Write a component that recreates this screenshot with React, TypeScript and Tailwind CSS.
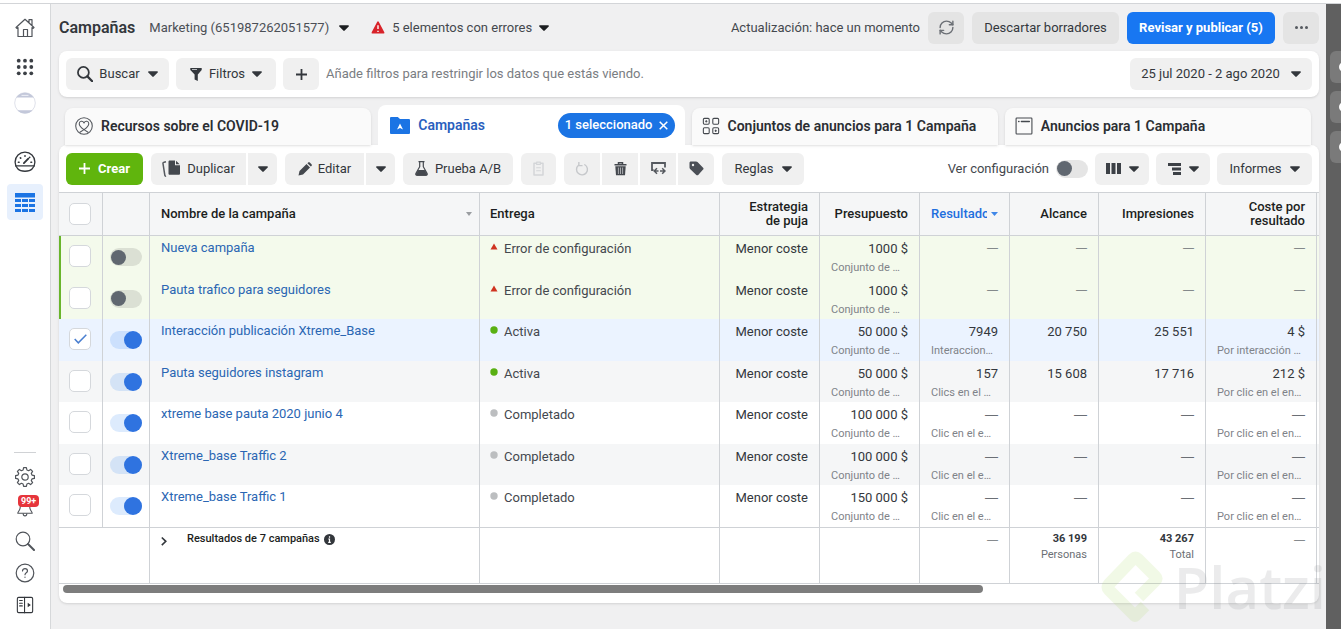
import type { ReactNode } from "react";
import clsx from "clsx";
import { RefreshCw } from "lucide-react";

type Status = "error" | "active" | "done";

interface Campaign {
  name: string;
  status: Status;
  on: boolean;
  checked?: boolean;
  budget: string;
  results?: string;
  resultsNote?: string;
  reach?: string;
  impressions?: string;
  cost?: string;
  costNote?: string;
}

const CAMPAIGNS: Campaign[] = [
  { name: "Nueva campaña", status: "error", on: false, budget: "1000 $" },
  { name: "Pauta trafico para seguidores", status: "error", on: false, budget: "1000 $" },
  {
    name: "Interacción publicación Xtreme_Base",
    status: "active",
    on: true,
    checked: true,
    budget: "50 000 $",
    results: "7949",
    resultsNote: "Interaccion…",
    reach: "20 750",
    impressions: "25 551",
    cost: "4 $",
    costNote: "Por interacción …",
  },
  {
    name: "Pauta seguidores instagram",
    status: "active",
    on: true,
    budget: "50 000 $",
    results: "157",
    resultsNote: "Clics en el …",
    reach: "15 608",
    impressions: "17 716",
    cost: "212 $",
    costNote: "Por clic en el en…",
  },
  { name: "xtreme base pauta 2020 junio 4", status: "done", on: true, budget: "100 000 $", resultsNote: "Clic en el e…", costNote: "Por clic en el en…" },
  { name: "Xtreme_base Traffic 2", status: "done", on: true, budget: "100 000 $", resultsNote: "Clic en el e…", costNote: "Por clic en el en…" },
  { name: "Xtreme_base Traffic 1", status: "done", on: true, budget: "150 000 $", resultsNote: "Clic en el e…", costNote: "Por clic en el en…" },
];

const STATUS_LABEL: Record<Status, string> = {
  error: "Error de configuración",
  active: "Activa",
  done: "Completado",
};

/* ---------- icons ---------- */

function Icon({ size = 20, className, children }: { size?: number; className?: string; children: ReactNode }) {
  return (
    <svg
      width={size}
      height={size}
      viewBox="0 0 20 20"
      fill="none"
      stroke="currentColor"
      strokeWidth="1.2"
      strokeLinecap="round"
      strokeLinejoin="round"
      aria-hidden="true"
      className={clsx("shrink-0", className)}
    >
      {children}
    </svg>
  );
}

function Caret({ className }: { className?: string }) {
  return (
    <svg width="10" height="6" viewBox="0 0 10 6" fill="currentColor" aria-hidden="true" className={clsx("shrink-0", className)}>
      <path d="M.9.2h8.2c.8 0 1.1.8.6 1.3L5.7 5.6a1 1 0 0 1-1.4 0L.3 1.5C-.2 1 .1.2.9.2Z" />
    </svg>
  );
}

const HomeIcon = () => (
  <Icon className="text-[#50545a]">
    <path d="M1 9.5 10 1.3l9 8.2-.9.9L17 9.6V18.5H3V9.6l-1.1.8Z M14 4.8V1.6h3v6" />
    <path d="M8.5 18.5v-7h4v7" />
  </Icon>
);

const DotsIcon = () => (
  <Icon size={18} className="text-[#3c4046]">
    {[3, 10, 17].map((y) => [3, 10, 17].map((x) => <circle key={`${x}-${y}`} cx={x} cy={y} r="2.1" fill="currentColor" stroke="none" />))}
  </Icon>
);

const AvatarIcon = () => (
  <svg width="22" height="22" viewBox="0 0 22 22" fill="none" aria-hidden="true">
    <circle cx="11" cy="11" r="10.3" fill="#fff" stroke="#dfe1ea" />
    <path d="M2.2 5.4a10.6 10.6 0 0 1 17.6 0Z" fill="#c3c8da" />
    <path d="M3.4 18.2h15.2a10.5 10.5 0 0 1-15.2 0Z" fill="#c3c8da" />
    <path d="M7.5 3.4h7" stroke="#eef0f6" />
  </svg>
);

const GaugeIcon = () => (
  <Icon className="text-[#33373c]" size={22}>
    <path d="M3.6 16.4a9 9 0 1 1 12.8 0c-1 1.1-3 2-6.4 2s-5.4-.9-6.4-2Z" />
    <path d="M1.6 13.6h16.8" />
    <path d="m9 11 4-4" strokeWidth="1.7" />
    <path d="M4 10.2h.6M5.8 6.2l.3.3M10 4.3v.5M15.4 10.2h.6M14.3 5.7l-.2.2" strokeWidth="1.5" />
  </Icon>
);

const TableIcon = () => (
  <svg width="20" height="19" viewBox="0 0 20 19" fill="#1b74e4" aria-hidden="true">
    <path d="M0 0h20v4.5H0z" />
    {[6, 11, 16].map((y) => [0, 7, 14].map((x) => <rect key={`${x}-${y}`} x={x} y={y} width="6" height="3" />))}
  </svg>
);

const GearIcon = () => (
  <Icon className="text-[#50545a]">
    <path d="M8.6 1.3h2.8l.5 2.4 1.7.7 2-1.3 2 2-1.3 2 .7 1.7 2.4.5v2.8l-2.4.5-.7 1.7 1.3 2-2 2-2-1.3-1.7.7-.5 2.4H8.6l-.5-2.4-1.7-.7-2 1.3-2-2 1.3-2-.7-1.7-2.4-.5V9.3l2.4-.5.7-1.7-1.3-2 2-2 2 1.3 1.7-.7Z" transform="translate(0 -.7)" />
    <circle cx="10" cy="10" r="3.2" />
  </Icon>
);

const BellIcon = () => (
  <Icon className="text-[#50545a]" size={18}>
    <path d="M10 2.5c-3.4 0-5.3 2.3-5.3 5.3 0 4-2.7 5-2.7 7h16c0-2-2.7-3-2.7-7 0-3-1.9-5.3-5.3-5.3Z" />
    <path d="M8 15.2c0 3.2 4 3.2 4 0" />
  </Icon>
);

const SearchIcon = ({ bold }: { bold?: boolean }) => (
  <Icon size={bold ? 16 : 20} className={bold ? "text-[#33373c]" : "text-[#50545a]"}>
    <circle cx="8" cy="8" r="6.8" strokeWidth={bold ? 2.2 : 1.2} />
    <path d="m13 13 6 6" strokeWidth={bold ? 2.8 : 2} />
  </Icon>
);

const HelpIcon = () => (
  <Icon className="text-[#50545a]">
    <circle cx="10" cy="10" r="8.8" />
    <path d="M7.5 8c0-3.3 5-3.3 5 0 0 1.8-2.5 1.8-2.5 3.7M10 14v.3" />
  </Icon>
);

const SidePanelIcon = () => (
  <Icon size={18} className="text-[#33373c]">
    <rect x="1.5" y="1.5" width="17" height="17" rx="1.5" />
    <path d="M9.5 1.5v17M4 5h3M4 8h3M4 11h3" />
    <path d="m13 7.5 3.5 2.5-3.5 2.5Z" fill="currentColor" stroke="none" />
  </Icon>
);

const WarningIcon = () => (
  <svg width="14" height="13" viewBox="0 0 15 14" aria-hidden="true">
    <path d="M6.7.7a.9.9 0 0 1 1.6 0l6 11.5a.9.9 0 0 1-.8 1.3h-12a.9.9 0 0 1-.8-1.3Z" fill="#d8232a" />
    <path d="M7.5 4.5v4M7.5 10.5v1.4" stroke="#fff" strokeWidth="1.5" />
  </svg>
);

const FunnelIcon = () => (
  <svg width="12" height="13" viewBox="0 0 12 13" aria-hidden="true">
    <path d="M.3 0h11.4v2L7.8 6.5V13L4.600 11.5v-5L.3 2Z" fill="#33373c" />
    <path d="M2 1.5h5" stroke="#b5b8bc" />
  </svg>
);

const PlusIcon = () => (
  <svg width="11" height="11" viewBox="0 0 11 11" stroke="currentColor" strokeWidth="1.8" aria-hidden="true">
    <path d="M5.5 0v11M0 5.5h11" />
  </svg>
);

const HeartIcon = () => (
  <Icon size={18} className="text-[#55595f]">
    <circle cx="10" cy="10" r="9.2" />
    <path d="m5.5 17 4.5-3c-3-2-5.3-4-5.3-6.5 0-3.2 4-3.7 5.3-.9 1.3-2.8 5.3-2.3 5.3.9 0 2.5-2.3 4.5-5.3 6.5l4.5 3" />
  </Icon>
);

const FolderIcon = () => (
  <svg width="20" height="17" viewBox="0 0 20 17" aria-hidden="true">
    <path d="M1.3 0h6.5L10 2h8.7c.8 0 1.3.5 1.3 1.3v12.4c0 .8-.5 1.3-1.3 1.3H1.3C.5 17 0 16.5 0 15.7V1.3C0 .5.5 0 1.3 0Z" fill="#1b74e4" />
    <path d="m10 6.500 3 6-3-1.500-3 1.500Z" fill="#fff" />
  </svg>
);

const AdSetIcon = () => (
  <Icon size={18} className="text-[#44484e]">
    <rect x="1.5" y="1.5" width="6.5" height="6.5" rx="1.2" />
    <rect x="12" y="1.5" width="6.5" height="6.5" rx="1.2" />
    <rect x="1.5" y="12" width="6.5" height="6.5" rx="1.2" />
    <rect x="12" y="12" width="6.5" height="6.5" rx="1.2" />
    <path d="M4.700 4v1.500M4 4.700h1.500M15.200 14.500V16M14.500 15.200H16" />
  </Icon>
);

const AdIcon = () => (
  <Icon size={18} className="text-[#44484e]">
    <rect x="1.2" y="1.2" width="17.6" height="17.6" rx=".8" />
    <path d="M4 5h.5M7 5h9" strokeWidth="1.4" />
  </Icon>
);

const DuplicateIcon = () => (
  <svg width="19" height="17" viewBox="0 0 19 17" aria-hidden="true">
    <path d="M8 .5h5v4.700h5v8.300c0 .8-.5 1.300-1.300 1.300H7.800c-.8 0-1.300-.5-1.300-1.300V1.800C6.500 1 7 .5 8 .5ZM14 .8l3.700 3.500H14Z" fill="#44484e" />
    <path d="M4 1.800 2 2.200a1.200 1.200 0 0 0-1 1.400l1.800 11.600c.1.700.6 1.100 1.300 1" fill="none" stroke="#55595f" strokeWidth="1.5" />
  </svg>
);

const PencilIcon = () => (
  <svg width="14" height="14" viewBox="0 0 14 14" fill="#44484e" aria-hidden="true">
    <path d="M8.500 2 12 5.500 5 12.500.5 13.500 1.500 9ZM9.400 1.200l.7-.7c.5-.5 1.200-.5 1.700 0l1.700 1.700c.5.5.5 1.200 0 1.700l-.7.700Z" />
  </svg>
);

const FlaskIcon = () => (
  <svg width="13" height="15" viewBox="0 0 13 15" fill="none" stroke="#44484e" aria-hidden="true">
    <path d="M3.500.7h6M4.700.7v5L1 12.300c-.5 1 0 1.900 1 1.900h9c1 0 1.500-.9 1-1.900L8.300 5.700v-5" strokeWidth="1.2" />
    <path d="M3.200 9.500h6.600l2 4-.8.7H2l-.8-.7Z" fill="#44484e" />
  </svg>
);

const ClipboardIcon = () => (
  <Icon size={15} className="text-[#d3d5d8]">
    <path d="M7 3H4v15.500h12V3h-3" strokeWidth="2" />
    <path d="M7.500 1.500h5v3h-5ZM7.500 9h5M7.500 13h5" strokeWidth="1.5" />
  </Icon>
);

const UndoIcon = () => (
  <Icon size={14} className="text-[#c6c8cb]">
    <path d="M5 4.600a7.800 7.800 0 1 0 9-.7" strokeWidth="2" />
    <path d="M5.500.5v4.700H10" strokeWidth="2" />
  </Icon>
);

const TrashIcon = () => (
  <svg width="13" height="14" viewBox="0 0 13 14" fill="none" aria-hidden="true">
    <path d="M.5 2.700h12M4.500 2.200V.7h4v1.500" stroke="#44484e" strokeWidth="1.5" />
    <path d="M1.300 4.200h10.400l-.7 9.100H2Z" fill="#44484e" />
    <path d="M4.400 5.500V12M6.500 5.500V12M8.600 5.500V12" stroke="#a9abaf" />
  </svg>
);

const ExportIcon = () => (
  <svg width="15" height="14" viewBox="0 0 15 14" fill="none" stroke="#55595f" aria-hidden="true">
    <path d="M2.500 8H1V1h13v4.500" strokeWidth="1.8" />
    <path d="M7.500 9H4M6 6.200 3.200 9 6 11.800M9 9h4.500M11.200 6.200 14 9l-2.800 2.800" strokeWidth="1.5" />
  </svg>
);

const TagIcon = () => (
  <svg width="15" height="15" viewBox="0 0 15 15" aria-hidden="true">
    <path d="M2 .5h5c.7 0 1.100.2 1.500.6l5.600 5.600c.6.6.6 1.300 0 1.900l-4.900 5.300c-.6.6-1.300.6-1.900 0L1.100 8c-.4-.4-.6-.9-.6-1.500V2C.5 1 1 .5 2 .5Z" fill="#4b4f56" />
    <circle cx="4" cy="4" r="1.2" fill="#f0f0f0" />
  </svg>
);

const ColumnsIcon = () => (
  <svg width="15" height="11" viewBox="0 0 15 11" fill="#3c4046" aria-hidden="true">
    <path d="M0 0h4v11H0zM5.500 0h4v11h-4zM11 0h4v11h-4z" />
  </svg>
);

const BreakdownIcon = () => (
  <svg width="13" height="12" viewBox="0 0 13 12" fill="#3c4046" aria-hidden="true">
    <path d="M0 0h13v3H0zM4 4.500h9v3H4zM5 9h8v3H5z" />
  </svg>
);

const InfoIcon = () => (
  <svg width="11" height="11" viewBox="0 0 11 11" aria-hidden="true">
    <circle cx="5.5" cy="5.5" r="5.5" fill="#33373c" />
    <path d="M5.500 2.300v1.500M4.300 5h1.200v3.300M4.200 8.300h2.600" stroke="#fff" strokeWidth="1.2" fill="none" />
  </svg>
);

/* ---------- controls ---------- */

function Button({ label, className, children }: { label?: string; className?: string; children: ReactNode }) {
  return (
    <button type="button" aria-label={label} className={clsx("flex h-8 shrink-0 items-center justify-center rounded-md whitespace-nowrap", className)}>
      {children}
    </button>
  );
}

function Checkbox({ label, checked }: { label: string; checked?: boolean }) {
  return (
    <label className="inline-grid place-items-center align-top">
      <input type="checkbox" aria-label={label} defaultChecked={checked} className="peer col-start-1 row-start-1 size-[22px] appearance-none rounded-[5px] border border-[#d5d8dc] bg-white" />
      <svg width="13" height="10" viewBox="0 0 13 10" fill="none" stroke="#4a7fd0" strokeWidth="1.5" aria-hidden="true" className="pointer-events-none invisible col-start-1 row-start-1 peer-checked:visible">
        <path d="m.7 5 3.600 3.800L12.300.7" />
      </svg>
    </label>
  );
}

function Switch({ label, on }: { label: string; on?: boolean }) {
  return (
    <input
      type="checkbox"
      role="switch"
      aria-label={label}
      defaultChecked={on}
      className="flex h-[18px] w-8 appearance-none items-center rounded-full bg-black/10 px-px before:size-[15px] before:rounded-full before:bg-[#606770] checked:justify-end checked:bg-[#1877f2]/15 checked:px-0 checked:before:size-[18px] checked:before:bg-[#2f73e0]"
    />
  );
}

function RailButton({ label, active, className, children }: { label: string; active?: boolean; className?: string; children: ReactNode }) {
  return (
    <button type="button" aria-label={label} className={clsx("flex w-9 shrink-0 items-center justify-center rounded", active && "bg-[#e7f0fd]", className)}>
      {children}
    </button>
  );
}

function Rail() {
  return (
    <nav aria-label="Herramientas" className="flex w-[51px] shrink-0 flex-col items-center border-r border-[#d6d8da] bg-white pt-1.5 pb-2">
      <RailButton label="Inicio" className="h-9"><HomeIcon /></RailButton>
      <RailButton label="Aplicaciones" className="mt-[3px] h-9"><DotsIcon /></RailButton>
      <RailButton label="Cuenta" className="h-9"><AvatarIcon /></RailButton>
      <RailButton label="Resumen de la cuenta" className="mt-[23px] h-9"><GaugeIcon /></RailButton>
      <RailButton label="Campañas" active className="mt-1 h-9"><TableIcon /></RailButton>
      <div className="mt-auto mb-2 w-[22px] border-t border-[#d0d2d5]" />
      <RailButton label="Configuración" className="h-8"><GearIcon /></RailButton>
      <RailButton label="Notificaciones" className="relative h-8">
        <BellIcon />
        <span className="absolute top-0.5 left-[11px] rounded-sm bg-[#e6353b] px-[3px] text-[9px] leading-3 font-bold text-white">99+</span>
      </RailButton>
      <RailButton label="Buscar" className="h-8"><SearchIcon /></RailButton>
      <RailButton label="Ayuda" className="h-8"><HelpIcon /></RailButton>
      <RailButton label="Contraer" className="h-8"><SidePanelIcon /></RailButton>
    </nav>
  );
}

function Header() {
  return (
    <header className="flex h-[47px] items-center">
      <h1 className="text-base font-semibold text-[#33373c]">Campañas</h1>
      <button type="button" className="ml-3.5 flex items-center gap-2.5 text-[#4b4f56]">
        Marketing (651987262051577)
        <Caret className="text-[#1c1e21]" />
      </button>
      <button type="button" className="ml-[22px] flex items-center gap-[7px] text-[#44484e]">
        <WarningIcon />
        5 elementos con errores
        <Caret className="text-[#1c1e21]" />
      </button>
      <div className="ml-auto flex items-center gap-2">
        <span className="text-[#44484e]">Actualización: hace un momento</span>
        <Button label="Actualizar" className="w-9 bg-[#e4e4e4]"><RefreshCw size={17} strokeWidth={2} className="text-[#6b6f75]" /></Button>
        <Button className="w-[147px] bg-[#e4e4e4]">Descartar borradores</Button>
        <Button className="w-[148px] bg-[#1877f2] font-bold text-white">Revisar y publicar (5)</Button>
        <Button label="Más" className="w-9 bg-[#e4e4e4]">
          <svg width="13" height="3" viewBox="0 0 13 3" fill="#55595f" aria-hidden="true">
            <circle cx="1.5" cy="1.5" r="1.5" />
            <circle cx="6.5" cy="1.5" r="1.5" />
            <circle cx="11.5" cy="1.5" r="1.5" />
          </svg>
        </Button>
      </div>
    </header>
  );
}

function FilterBar() {
  return (
    <div className="flex h-[46px] items-center gap-[7px] rounded-lg bg-white px-[7px] shadow-sm">
      <Button className="w-[103px] gap-1.5 bg-[#f0f0f0]"><SearchIcon bold />Buscar<Caret className="ml-0.5" /></Button>
      <Button className="w-[100px] gap-[7px] bg-[#f0f0f0]"><FunnelIcon />Filtros<Caret /></Button>
      <Button label="Añadir filtro" className="w-9 bg-[#f0f0f0]"><PlusIcon /></Button>
      <input type="text" aria-label="Filtros" placeholder="Añade filtros para restringir los datos que estás viendo." className="min-w-0 flex-1 bg-transparent outline-none placeholder:text-[#7a7d82]" />
      <Button className="w-[182px] gap-[11px] bg-[#f0f0f0]">25 jul 2020 - 2 ago 2020<Caret /></Button>
    </div>
  );
}

function Tab({ icon, label, active, children }: { icon: ReactNode; label: string; active?: boolean; children?: ReactNode }) {
  return (
    <div className={clsx("flex min-w-0 items-center rounded-t-lg", active ? "h-10 bg-white pr-2.5 pl-3" : "h-[37px] bg-[#fafafa] px-2.5 pb-0.5 shadow-sm")}>
      <button type="button" role="tab" aria-selected={!!active} className={clsx("flex items-center gap-2 text-sm font-semibold whitespace-nowrap", active ? "text-[#2a5fbe]" : "text-[#2b2e33]")}>
        {icon}
        {label}
      </button>
      {children}
    </div>
  );
}

function Tabs() {
  return (
    <div role="tablist" className="mt-2 grid grid-cols-4 items-end gap-[7px] pr-2 pl-1.5">
      <Tab icon={<HeartIcon />} label="Recursos sobre el COVID-19" />
      <Tab icon={<FolderIcon />} label="Campañas" active>
        <button type="button" className="ml-auto flex h-[25px] items-center gap-1.5 rounded-full bg-[#1b74e4] px-[7px] font-medium whitespace-nowrap text-white">
          1 seleccionado
          <svg width="9" height="9" viewBox="0 0 9 9" stroke="currentColor" strokeWidth="1.5" aria-hidden="true">
            <path d="m.7.7 7.600 7.600M8.300.7.7 8.300" />
          </svg>
        </button>
      </Tab>
      <Tab icon={<AdSetIcon />} label="Conjuntos de anuncios para 1 Campaña" />
      <Tab icon={<AdIcon />} label="Anuncios para 1 Campaña" />
    </div>
  );
}

function Toolbar() {
  return (
    <div className="flex h-[47px] items-center gap-2 px-[7px]">
      <Button className="w-[77px] gap-2 bg-[#60b50d] font-bold text-white"><PlusIcon />Crear</Button>
      <div className="flex gap-0.5">
        <Button className="w-[95px] gap-1.5 rounded-r-none bg-[#f0f0f0]"><DuplicateIcon />Duplicar</Button>
        <Button label="Más opciones de duplicar" className="w-[29px] rounded-l-none bg-[#f0f0f0]"><Caret /></Button>
      </div>
      <div className="flex gap-0.5">
        <Button className="w-[79px] gap-1.5 rounded-r-none bg-[#f0f0f0]"><PencilIcon />Editar</Button>
        <Button label="Más opciones de editar" className="w-[29px] rounded-l-none bg-[#f0f0f0]"><Caret /></Button>
      </div>
      <Button className="w-[110px] gap-[7px] bg-[#f0f0f0]"><FlaskIcon />Prueba A/B</Button>
      <Button label="Pegar" className="w-[35px] bg-[#f0f0f0]"><ClipboardIcon /></Button>
      <div className="flex gap-0.5">
        <Button label="Deshacer" className="w-9 rounded-r-none bg-[#f0f0f0]"><UndoIcon /></Button>
        <Button label="Eliminar" className="w-9 rounded-none bg-[#f0f0f0]"><TrashIcon /></Button>
        <Button label="Exportar" className="w-9 rounded-none bg-[#f0f0f0]"><ExportIcon /></Button>
        <Button label="Etiquetas" className="w-9 rounded-l-none bg-[#f0f0f0]"><TagIcon /></Button>
      </div>
      <Button className="w-[82px] gap-2 bg-[#f0f0f0]">Reglas<Caret /></Button>
      <div className="ml-auto flex items-center gap-[7px]">
        <span className="text-[#44484e]">Ver configuración</span>
        <Switch label="Ver configuración" />
        <Button label="Columnas" className="w-[54px] gap-2 bg-[#f0f0f0]"><ColumnsIcon /><Caret /></Button>
        <Button label="Desglose" className="w-[54px] gap-2 bg-[#f0f0f0]"><BreakdownIcon /><Caret /></Button>
        <Button className="w-[95px] gap-2 bg-[#f0f0f0]">Informes<Caret /></Button>
      </div>
    </div>
  );
}

/* ---------- table ---------- */

const cell = "border-r border-[#cfd2d6]";
const head = "border-y border-r border-[#cfd2d6] bg-[#f5f6f7] px-[11px] font-medium text-[#1c1e21]";

function Dash({ small }: { small?: boolean }) {
  return <span className={clsx("font-['Liberation_Sans',sans-serif] text-[#6b6f75]", small ? "text-[11px]" : "text-[13px]")}>—</span>;
}

function Metric({ value, note, draft }: { value?: string; note?: string; draft?: boolean }) {
  return (
    <td className={clsx(cell, "px-[11px] pt-1 text-right align-top whitespace-nowrap text-[#33373c]")}>
      <div className={clsx(!value && draft ? "leading-3.5" : "leading-[18px]")}>{value ?? <Dash small={draft} />}</div>
      {note && <div className="text-left text-[11px] leading-[19px] text-[#7f8389]">{note}</div>}
    </td>
  );
}

function CampaignRow({ campaign: c }: { campaign: Campaign }) {
  const draft = c.status === "error";
  return (
    <tr className={clsx("odd:h-[42px] even:h-[41px]", draft ? "bg-[#f4faec]" : c.checked ? "bg-[#ebf3ff]" : "bg-white even:bg-[#f5f6f7]")}>
      <td className={clsx(cell, "border-l-2 pr-[3px] pb-0.5 text-center align-middle", draft ? "border-l-[#69b52c]" : "border-l-transparent")}>
        <Checkbox label={`Seleccionar ${c.name}`} checked={c.checked} />
      </td>
      <td className={clsx(cell, "pl-[7px]")}>
        <Switch label={`Activar ${c.name}`} on={c.on} />
      </td>
      <td className={clsx(cell, "px-[11px] pt-1 align-top leading-4")}>
        <a href="#" className="text-[#2a66b3]">{c.name}</a>
      </td>
      <td className={clsx(cell, "px-2.5 pt-1 align-top leading-[18px] text-[#44484e]")}>
        <div className="flex gap-1.5">
          <svg width="8" height="14" viewBox="0 0 8 14" aria-hidden="true">
            {draft ? <path d="M4 3.500 7.500 9.500H.5Z" fill="#cf3320" /> : <circle cx="4" cy="7" r="3.7" fill={c.status === "active" ? "#59b012" : "#bcbec0"} />}
          </svg>
          {STATUS_LABEL[c.status]}
        </div>
      </td>
      <Metric value="Menor coste" />
      <Metric value={c.budget} note="Conjunto de …" />
      <Metric value={c.results} note={c.resultsNote} draft={draft} />
      <Metric value={c.reach} draft={draft} />
      <Metric value={c.impressions} draft={draft} />
      <Metric value={c.cost} note={c.costNote} draft={draft} />
      <td />
    </tr>
  );
}

function CampaignTable() {
  const foot = "border-y border-r border-[#cfd2d6] px-[11px] pt-[3px] text-right align-top text-[11px] leading-4";
  return (
    <table className="w-full table-fixed border-separate border-spacing-0">
      <colgroup>
        <col className="w-11" />
        <col className="w-[47px]" />
        <col />
        <col className="w-[240px]" />
        <col className="w-[100px]" />
        <col className="w-[100px]" />
        <col className="w-[90px]" />
        <col className="w-[89px]" />
        <col className="w-[107px]" />
        <col className="w-[111px]" />
        <col className="w-0.5" />
      </colgroup>
      <thead>
        <tr className="h-11 text-right text-[13px] leading-[14px]">
          <th className="border-y border-r border-[#cfd2d6] bg-[#f5f6f7] pr-0.5 text-center"><Checkbox label="Seleccionar todo" /></th>
          <th className={head} aria-label="Estado" />
          <th className={clsx(head, "text-left")}>
            <div className="flex items-center justify-between">
              Nombre de la campaña
              <svg width="6" height="4" viewBox="0 0 6 4" fill="#9a9da1" aria-hidden="true" className="-mr-1"><path d="M0 0h6L3 4Z" /></svg>
            </div>
          </th>
          <th className={clsx(head, "pl-2.5 text-left")}>Entrega</th>
          <th className={head}>Estrategia<br />de puja</th>
          <th className={head}>Presupuesto</th>
          <th className={clsx(head, "text-[#1f6fde]")}>
            <div className="flex items-center gap-1">
              <span className="w-14 overflow-hidden">Resultado</span>
              <svg width="7" height="4" viewBox="0 0 7 4" fill="#3f87e8" aria-hidden="true"><path d="M0 0h7L3.500 4Z" /></svg>
            </div>
          </th>
          <th className={head}>Alcance</th>
          <th className={head}>Impresiones</th>
          <th className={head}>Coste por<br />resultado</th>
          <th className="border-y border-[#cfd2d6] bg-[#f5f6f7]" aria-hidden="true" />
        </tr>
      </thead>
      <tbody>
        {CAMPAIGNS.map((c) => <CampaignRow key={c.name} campaign={c} />)}
      </tbody>
      <tfoot>
        <tr className="h-[57px]">
          <td colSpan={2} className={foot} />
          <td className={clsx(foot, "text-left")}>
            <button type="button" className="flex items-center font-medium whitespace-nowrap text-[#1c1e21]">
              <svg width="6" height="14" viewBox="0 0 6 14" fill="none" stroke="#33373c" strokeWidth="1.6" aria-hidden="true" className="mr-5"><path d="m.8 5.500 4 3.800-4 3.800" /></svg>
              <span className="mr-1">Resultados de 7 campañas</span>
              <InfoIcon />
            </button>
          </td>
          <td className={foot} />
          <td className={foot} />
          <td className={foot} />
          <td className={foot}><Dash small /></td>
          <td className={foot}><b>36 199</b><div className="text-[#6b6f75]">Personas</div></td>
          <td className={foot}><b>43 267</b><div className="text-[#6b6f75]">Total</div></td>
          <td className={foot}><Dash small /></td>
          <td className="border-y border-[#cfd2d6]" />
        </tr>
      </tfoot>
    </table>
  );
}

function Watermark() {
  return (
    <div className="pointer-events-none absolute right-0 bottom-1 flex items-center gap-2.5 opacity-15">
      <svg width="64" height="76" viewBox="0 0 64 76" fill="none" stroke="#a8d860" strokeWidth="12" strokeLinejoin="round" aria-hidden="true">
        <path d="M39 48 55 32c2-2 2-3 0-5L38 10c-2-2-3-2-5 0L9 35c-2 2-2 4 0 6l26 26 10-10" />
      </svg>
      <span className="font-['Open_Sans',sans-serif] text-[58px] leading-11 font-semibold text-[#7d8084]">Platzi</span>
    </div>
  );
}

function SideStrip() {
  return (
    <aside aria-label="Panel lateral" className="flex w-[15px] shrink-0 flex-col gap-2 overflow-hidden bg-[#606060] pt-[47px] pl-1">
      {["Editar", "Gráficos", "Historial"].map((label) => (
        <button key={label} type="button" aria-label={label} className="flex h-8 w-9 shrink-0 items-center rounded-md bg-[#7a7a7a] pl-[9px]">
          <span className="size-2.5 rounded-full bg-white" />
        </button>
      ))}
    </aside>
  );
}

export default function App() {
  return (
    <div className="flex min-h-screen flex-col bg-white pt-[3px] font-['Roboto',sans-serif] text-[13px] text-[#33373c]">
      <div className="flex grow border-t border-[#d3d5d8]">
        <Rail />
        <main className="relative min-w-0 flex-1 overflow-hidden bg-[#f0f0f1] pr-[7px] pl-2">
          <Header />
          <FilterBar />
          <Tabs />
          <section className="rounded-lg bg-white pb-2.5 shadow">
            <Toolbar />
            <CampaignTable />
            <div className="mt-px ml-1 h-2 w-[73%] rounded-full bg-[#7d7d7d]" />
          </section>
          <Watermark />
        </main>
        <SideStrip />
      </div>
    </div>
  );
}
